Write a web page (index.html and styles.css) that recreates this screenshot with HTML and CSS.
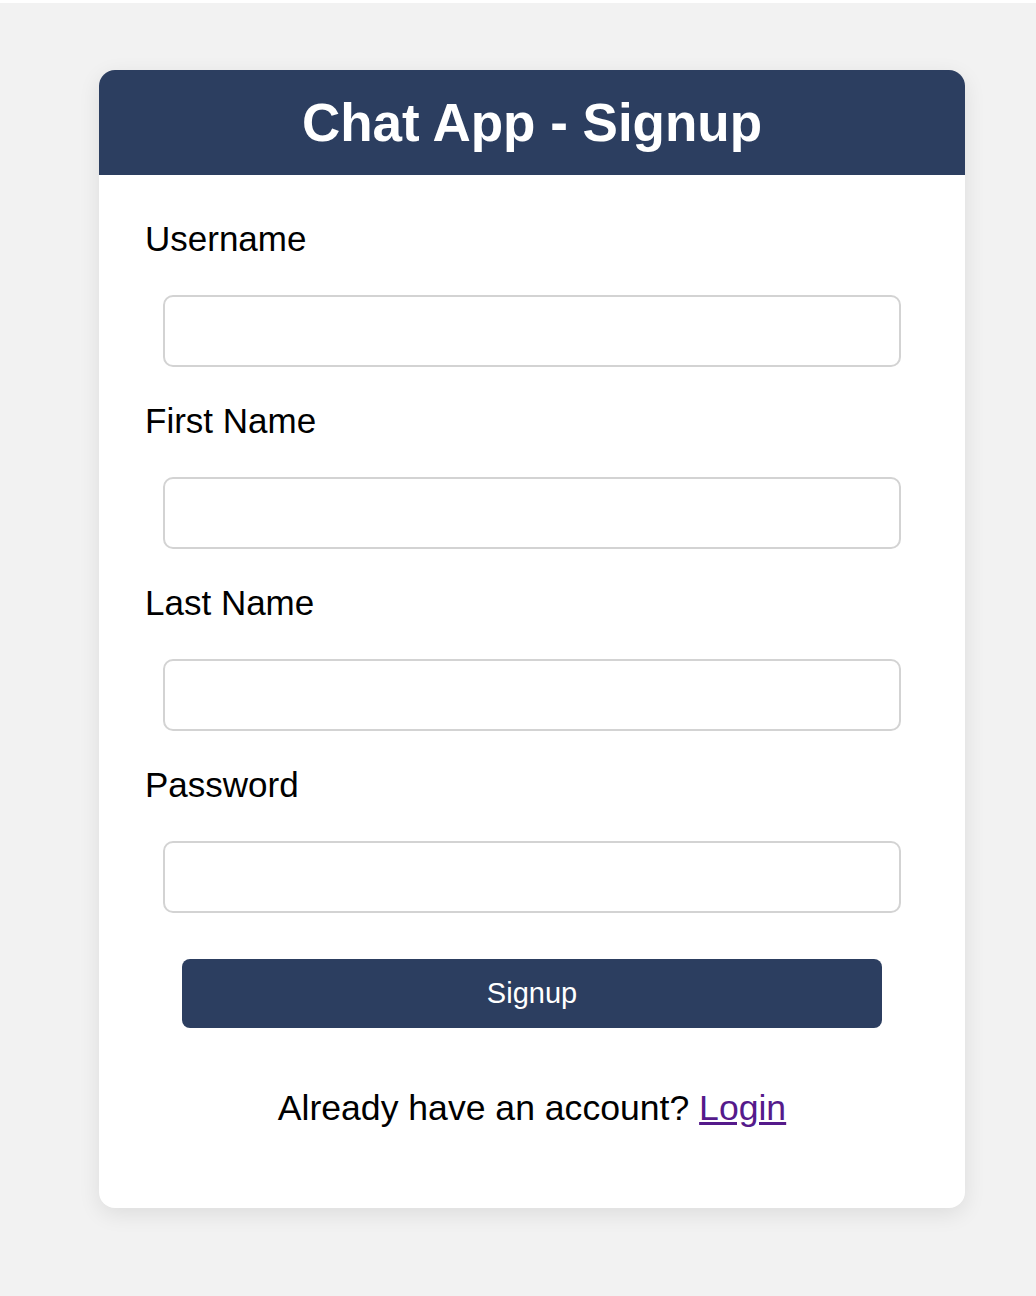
FILE: index.html
```html
<!DOCTYPE html>
<html lang="en">
<head>
<meta charset="utf-8">
<title>Chat App - Signup</title>
<link rel="stylesheet" href="styles.css">
</head>
<body>
<div class="page">
  <div class="card">
    <div class="card-header">
      <h1 class="title">Chat App - Signup</h1>
    </div>
    <form class="card-body">
      <div class="field">
        <label class="label" for="username">Username</label>
        <input class="input" id="username" type="text">
      </div>
      <div class="field">
        <label class="label" for="first">First Name</label>
        <input class="input" id="first" type="text">
      </div>
      <div class="field">
        <label class="label" for="last">Last Name</label>
        <input class="input" id="last" type="text">
      </div>
      <div class="field">
        <label class="label" for="password">Password</label>
        <input class="input" id="password" type="password">
      </div>
      <button class="btn" type="button">Signup</button>
      <p class="switch">Already have an account? <a class="link" href="#">Login</a></p>
    </form>
  </div>
</div>
</body>
</html>
```

FILE: styles.css
```css
html, body {
  margin: 0;
  padding: 0;
  background: #f2f2f2;
}

.page {
  border-top: 3px solid #ffffff;
  min-height: 1293px;
  font-family: "Liberation Sans", Arial, sans-serif;
}

.card {
  margin: 67px 0 0 99px;
  width: 866px;
  background: #ffffff;
  border-radius: 16px;
  overflow: hidden;
  box-shadow: 0 6px 22px rgba(0, 0, 0, 0.09);
}

.card-header {
  background: #2c3e60;
  height: 105px;
  display: flex;
  align-items: center;
  justify-content: center;
}

.title {
  margin: 0;
  color: #ffffff;
  font-size: 53px;
  font-weight: bold;
  line-height: 60px;
}

.card-body {
  padding: 44px 0 80px 0;
  display: flex;
  flex-direction: column;
}

.field {
  display: flex;
  flex-direction: column;
  margin-bottom: 34px;
}

.label {
  display: block;
  margin: 0 0 36px 46px;
  font-size: 35px;
  line-height: 40px;
  color: #000000;
}

.input {
  box-sizing: border-box;
  margin: 0 0 0 64px;
  width: 738px;
  height: 72px;
  border: 2px solid #d3d3d3;
  border-radius: 10px;
  background: #ffffff;
  font-size: 29px;
  padding: 0 16px;
  outline: none;
}

.btn {
  margin: 12px 0 0 83px;
  width: 700px;
  height: 69px;
  border: none;
  border-radius: 8px;
  background: #2c3e60;
  color: #ffffff;
  font-family: "Liberation Sans", Arial, sans-serif;
  font-size: 29px;
  cursor: pointer;
}

.switch {
  margin: 60px 0 0 0;
  text-align: center;
  font-size: 35.6px;
  line-height: 40px;
  color: #000000;
}

.link {
  color: #551a8b;
  text-decoration: underline;
}
```
